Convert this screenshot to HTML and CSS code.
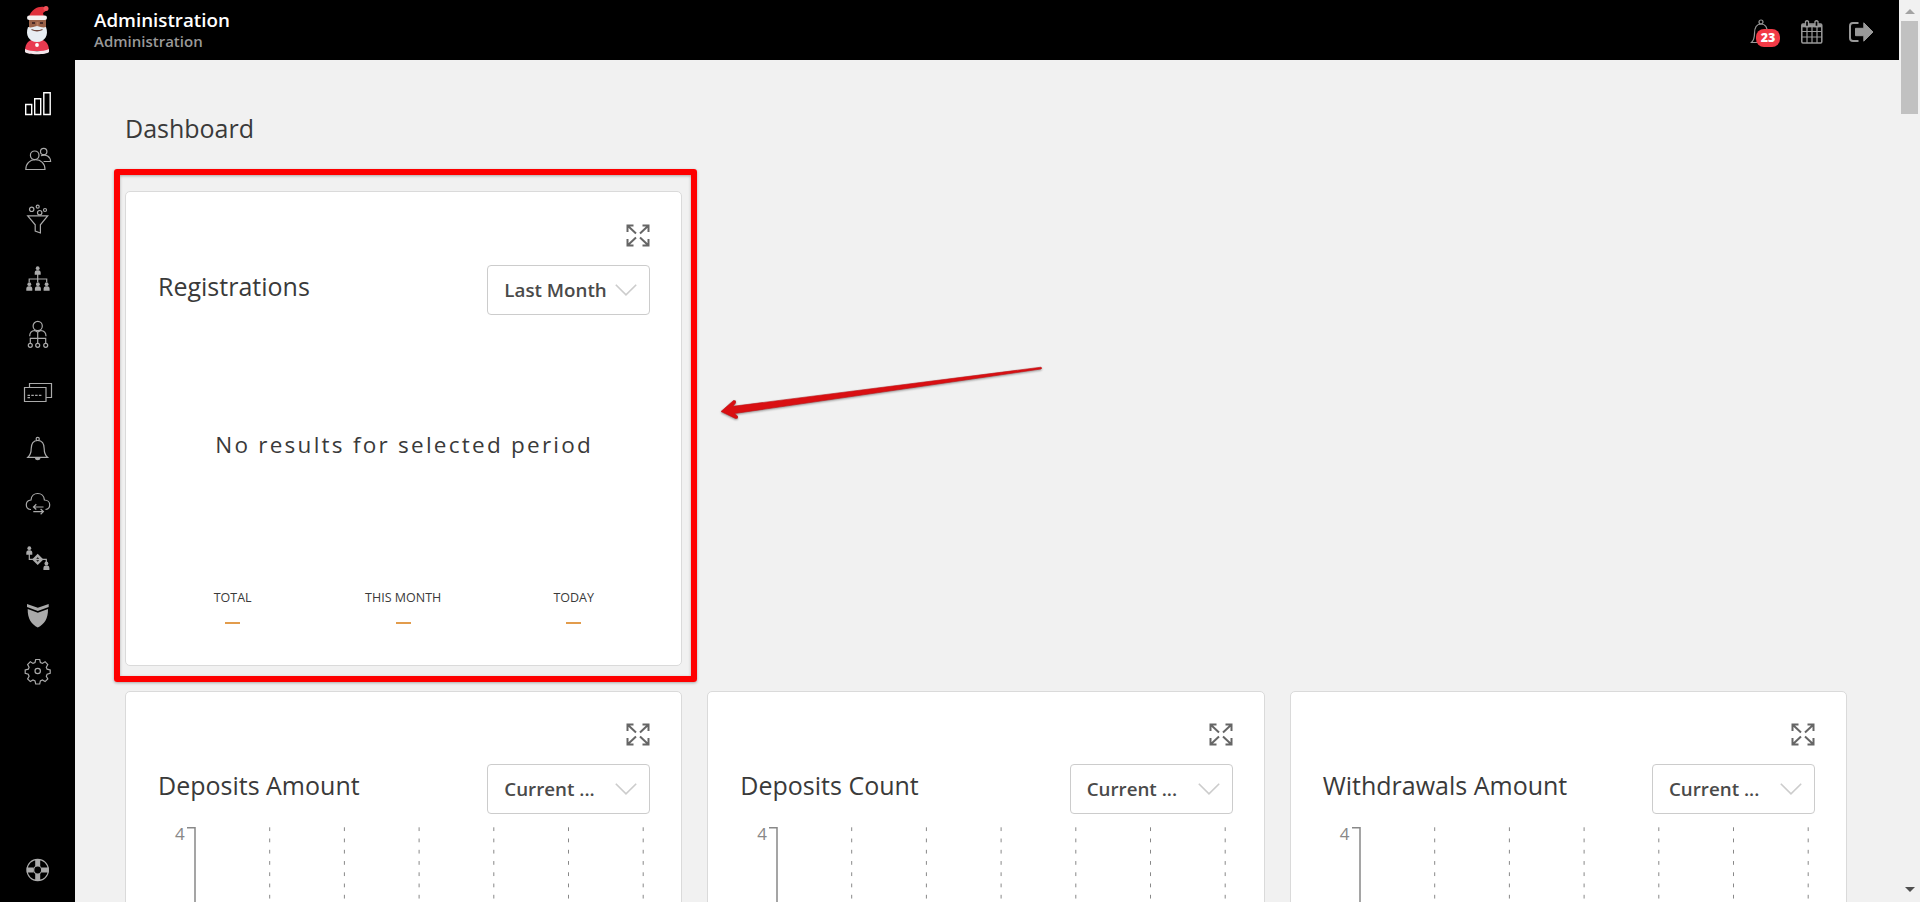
FILE: index.html
```html
<!DOCTYPE html>
<html lang="en">
<head>
<meta charset="utf-8">
<title>Dashboard</title>
<link rel="stylesheet" href="styles.css">
</head>
<body>
<svg class="defs" width="0" height="0">
  <defs>
    <g id="person"><circle cx="0" cy="-3.8" r="1.9"/><path d="M-3 2.8v-2.2a2.4 2.4 0 0 1 2-2.4h2a2.4 2.4 0 0 1 2 2.4v2.2z"/></g>
    <symbol id="expand" viewBox="0 0 24 23">
      <path fill="none" stroke="#666" stroke-width="2" d="M1.500 8V1.500h6M1.500 1.500l8.500 8M16.500 1.500h6V8M22.500 1.500l-8.500 8M1.500 15v6.500h6M1.500 21.500l8.500-8M16.500 21.500h6V15M22.500 21.500l-8.500-8"/>
    </symbol>
    <symbol id="chevron" viewBox="0 0 22 12"><path fill="none" stroke="#ccc" stroke-width="1.600" d="M.8.8 11 10.800 21.200.8"/></symbol>
    <symbol id="chart" viewBox="0 0 491 80">
      <g fill="none" stroke="#888">
        <path stroke-width="1.500" d="M11 .8h8V80"/>
        <path stroke-dasharray="3.750 7.500" d="M93.700 .3V80M168.400 .3V80M243.100 .3V80M317.800 .3V80M392.500 .3V80M467.200 .3V80"/>
      </g>
    </symbol>
  </defs>
</svg>
<div class="app">
  <aside class="sidebar">
    <svg class="logo" width="28" height="50" viewBox="0 0 28 50">
      <path fill="#e0313c" d="M5 12C7 4 15 1 20 2l3 3-4 3 1 4z"/><circle cx="22" cy="3.500" r="2.500" fill="#f0525a"/>
      <rect x="5" y="13" width="17" height="12" fill="#9a6248"/><path fill="#4b2c28" d="M8 17h3v2H8zM16 17h3v2h-3z"/><path fill="#b87a5c" d="M12.500 17h2v4h-2z"/>
      <rect x="3" y="10.500" width="20" height="4.500" rx="2.200" fill="#f4f1f1"/>
      <path fill="#e93a50" d="M1 46c0-8 4-12 12-12s12 4 12 12z"/>
      <path fill="#e8eef3" d="M4 22c3 1 5 0 9-1 4 1 6 2 9 1 3 8-1 15-9 15S1 30 4 22z"/><path fill="none" stroke="#70483d" stroke-width="1.300" d="M7.500 24.500c4 1.800 7 1.800 11 0"/>
      <circle cx="13" cy="40" r="1.900" fill="#fff"/><path fill="#f3e5ea" d="M1 44c6 3 18 3 24 0v3c-2 3-22 3-24 0z"/>
    </svg>
    <nav class="nav">
      <svg class="icon active" viewBox="0 0 40 40"><path d="M7.700 20.500h6v10h-6zM16.700 14.800h6v15.700h-6zM25.800 8.800h6.400v21.700h-6.400z"/></svg>
      <svg class="icon" viewBox="0 0 40 40"><circle cx="16.700" cy="16.300" r="4.300"/><path d="M7.800 30.500h19.200c0-6-4-9.800-9.600-9.800s-9.600 3.800-9.600 9.800z"/><circle cx="25.700" cy="12.500" r="3.200"/><path d="M23 16.800c5-2 9.400.8 9.600 5.700h-7"/></svg>
      <svg class="icon gap-5" viewBox="0 0 40 40"><circle cx="13.700" cy="10.300" r="2.200"/><circle cx="19.700" cy="7.700" r="1.500"/><circle cx="21.700" cy="13.700" r="2.200"/><circle cx="27" cy="11" r="1.500"/><path d="M9.700 16.800h20l-7.300 9v8.200l-5.200-2v-6.200z"/></svg>
      <svg class="icon gap-5" viewBox="0 0 40 40"><path d="M19.700 15v8M11.200 23v-3h17.500v3"/><g class="solid"><use href="#person" x="19.700" y="13"/><use href="#person" x="11.300" y="29"/><use href="#person" x="19.900" y="29"/><use href="#person" x="28.600" y="29"/></g></svg>
      <svg class="icon" viewBox="0 0 40 40"><circle cx="19.700" cy="12" r="4.600"/><path d="M11.700 22.300c0-3.800 2.600-5.600 5-5.800l3 1.500 3-1.500c2.700.2 5.300 2 5.300 5.800M19.700 18v11M12.300 29v-4.600h15.400V29"/><circle cx="12.300" cy="31.300" r="2"/><circle cx="19.700" cy="31.300" r="2"/><circle cx="27.700" cy="31.300" r="2"/></svg>
      <svg class="icon gap-4" viewBox="0 0 40 40"><path d="M6.500 14.500h21.500v14h-21.500zM11.500 14.500v-4h22v14h-5.500"/><path stroke-dasharray="2.500 1.300" d="M9.500 22.300h15M9.500 24.600h3.500"/></svg>
      <svg class="icon gap-1" viewBox="0 0 40 40"><circle cx="19.700" cy="9.900" r="1.600"/><path d="M9.900 28.300c2-1.700 3.300-4.300 3.300-8.500 0-5.500 2.200-8.300 6.500-8.300s6.500 2.800 6.500 8.300c0 4.200 1.300 6.800 3.300 8.500z"/><path class="solid" d="M17 29h5.400c0 3-5.400 3-5.400 0z"/></svg>
      <svg class="icon" viewBox="0 0 40 40"><path d="M13 25.500h-.5C9.800 25.200 8.300 23 8.300 20.800c0-2.800 2-4.600 4.700-4.800.3-4 3.200-6.500 6.700-6.500s6.400 2.500 6.700 6.500c3 0 5.300 2 5.300 4.800 0 2.400-1.700 4.500-4.200 4.700M25.500 23H15.500M18.300 20.300 15.500 23l2.800 2.500M15.300 27.600h10M22.600 25l2.800 2.600-2.800 2.600"/></svg>
      <svg class="icon" viewBox="0 0 40 40"><path d="M11.300 15v5.300h5M23 20.300h5.300V25"/><g class="solid"><use href="#person" x="11.300" y="13"/><use href="#person" x="28.400" y="28.300"/><path fill-rule="evenodd" d="m19.700 14.700 5.700 5.700-5.700 5.700-5.700-5.700zM18.200 19.700l1.500-1.500 1.500 1.500zM18.200 21.300h3l-1.500 1.500z"/></g></svg>
      <svg class="icon gap-2" viewBox="0 0 40 40"><path class="solid" d="M9 8l10.800 3.700L30.700 8v3l-10.900 4L9 11zM9.700 13l10.100 3.700L30 13c.2 9.600-3.600 15.400-10.200 18.400-6.500-3-10.300-8.800-10.100-18.400z"/></svg>
      <svg class="icon" viewBox="0 0 40 40"><circle cx="19.700" cy="20" r="2.700"/><path d="M17.700 8.500h4l.7 3 2 .9 2.700-1.700 2.700 2.800-1.500 2.700.8 2 3.100.8v3.400l-3.100.8-.8 2 1.500 2.700-2.700 2.700-2.700-1.600-2 .9-.7 3.100h-4l-.7-3.100-2-.9-2.700 1.600-2.700-2.700 1.500-2.700-.8-2-3.100-.8v-3.400l3.100-.8.8-2-1.500-2.700 2.700-2.800 2.700 1.700 2-.9z"/></svg>
    </nav>
    <svg class="icon help" viewBox="0 0 40 40"><circle cx="19.700" cy="20" r="10.700"/><circle cx="19.700" cy="20" r="4"/><path stroke-width="5" d="M19.700 9v7M19.700 24v7M8.700 20h7M23.700 20h7"/></svg>
  </aside>
  <div class="page">
    <header class="topbar">
      <div class="brand"><div class="brand-title">Administration</div><div class="brand-sub">Administration</div></div>
      <div class="tools">
        <div class="alerts">
          <svg width="22" height="26" viewBox="0 0 22 26" fill="none" stroke="#999" stroke-width="1.200"><circle cx="11" cy="3" r="2"/><path d="M1.500 23.500c2-2 3-4.500 3-9C4.500 8.500 6.500 5 11 5s6.500 3.500 6.500 9.500c0 4.500 1 7 3 9z"/></svg>
          <span class="badge">23</span>
        </div>
        <svg class="calendar" width="22" height="24" viewBox="0 0 22 24" fill="none" stroke="#999"><rect x=".8" y="4" width="20" height="19" rx="1.200" stroke-width="1.500"/><path stroke-width="3" d="M1 5.800h20"/><path stroke-width="1.200" d="M1 11.500h20M1 17h20M6 7v16M11 7v16M16 7v16"/><path fill="#000" stroke-width="1.300" d="M4.500 1.500q1.500-1.500 3 0v5h-3zM14 1.500q1.500-1.500 3 0v5h-3z"/></svg>
        <svg width="26" height="22" viewBox="0 0 26 22"><path fill="none" stroke="#999" stroke-width="2" d="M10.500 2H5Q2 2 2 5v12q0 3 3 3h5.500"/><path fill="#999" stroke="#999" stroke-linejoin="round" d="M7.500 7.300h8.300V1.800L25 11l-9.200 9.200v-5.500H7.500z"/></svg>
      </div>
    </header>
    <main class="content">
      <h1 class="title">Dashboard</h1>
      <div class="grid">
        <section class="card card-first">
          <svg class="expand" width="24" height="23"><use href="#expand"/></svg>
          <div class="card-head"><h2 class="card-title">Registrations</h2><div class="select"><span>Last Month</span><svg width="22" height="12"><use href="#chevron"/></svg></div></div>
          <div class="empty">No results for selected period</div>
          <div class="stats">
            <div class="stat">TOTAL<i class="dash"></i></div><div class="stat">THIS MONTH<i class="dash"></i></div><div class="stat">TODAY<i class="dash"></i></div>
          </div>
        </section>
        <section class="card">
          <svg class="expand" width="24" height="23"><use href="#expand"/></svg>
          <div class="card-head"><h2 class="card-title">Deposits Amount</h2><div class="select"><span>Current ...</span><svg width="22" height="12"><use href="#chevron"/></svg></div></div>
          <div class="chart"><span class="tick">4</span><svg width="491" height="80"><use href="#chart"/></svg></div>
        </section>
        <section class="card">
          <svg class="expand" width="24" height="23"><use href="#expand"/></svg>
          <div class="card-head"><h2 class="card-title">Deposits Count</h2><div class="select"><span>Current ...</span><svg width="22" height="12"><use href="#chevron"/></svg></div></div>
          <div class="chart"><span class="tick">4</span><svg width="491" height="80"><use href="#chart"/></svg></div>
        </section>
        <section class="card">
          <svg class="expand" width="24" height="23"><use href="#expand"/></svg>
          <div class="card-head"><h2 class="card-title">Withdrawals Amount</h2><div class="select"><span>Current ...</span><svg width="22" height="12"><use href="#chevron"/></svg></div></div>
          <div class="chart"><span class="tick">4</span><svg width="491" height="80"><use href="#chart"/></svg></div>
        </section>
      </div>
    </main>
  </div>
  <div class="scrollbar">
    <svg width="10" height="5" viewBox="0 0 10 5"><path fill="#a3a3a3" d="M0 5 5 0l5 5z"/></svg>
    <div class="thumb"></div>
    <svg width="10" height="5" viewBox="0 0 10 5"><path fill="#505050" d="M0 0h10L5 5z"/></svg>
  </div>
</div>
<div class="highlight"></div>
<svg class="pointer" width="340" height="70" viewBox="710 360 340 70"><path fill="#d90f12" stroke="#c01014" stroke-width=".6" stroke-linejoin="round" d="M721 411.500 733.500 400.500Q736.500 400 735.500 403L733 406.300 1041 367.200Q1042.500 368 1041 369L734.500 413.500 737.500 416Q738.500 419 735.500 418.500z"/></svg>
</body>
</html>
```
FILE: styles.css
```css
* { box-sizing: border-box; }
html, body { margin: 0; height: 100%; overflow: hidden; }
body { font-family: "Open Sans", sans-serif; color: #3a3a3a; background: #f1f1f1; }
svg { display: block; flex: none; }
.defs { position: absolute; }
.app { display: flex; height: 902px; }

.sidebar { width: 75px; background: #000; display: flex; flex-direction: column; align-items: center; padding-top: 5px; }
.nav { margin-top: 29px; display: flex; flex-direction: column; gap: 15px; }
.icon { width: 40px; height: 40px; fill: none; stroke: #aaa; stroke-width: 1.2; }
.icon.active { stroke: #fff; stroke-width: 1.4; }
.icon .solid { fill: #aaa; stroke: none; }
.gap-1 { margin-top: 1px; }
.gap-2 { margin-top: 2px; }
.gap-4 { margin-top: 4px; }
.gap-5 { margin-top: 5px; }
.help { margin: auto 0 12px; }

.page { flex: 1; min-width: 0; display: flex; flex-direction: column; }
.topbar { height: 60px; background: #000; display: flex; justify-content: space-between; padding: 0 25px 0 19px; flex: none; }
.brand { font-weight: 600; padding-top: 8px; }
.brand-title { color: #fff; font-size: 18.75px; line-height: 24px; }
.brand-sub { color: #999; font-size: 15px; line-height: 18px; }
.tools { display: flex; align-items: center; padding-top: 4px; }
.alerts { position: relative; margin-right: 29px; }
.badge { position: absolute; left: 6px; top: 10px; width: 24px; height: 18px; border-radius: 8px; background: #f23a46; color: #fff; font-size: 12.5px; font-weight: 800; line-height: 17px; text-align: center; }
.calendar { margin-right: 25px; }

.content { flex: 1; min-height: 0; overflow: hidden; padding: 49px 52px 0 50px; }
.title { margin: 0; font-size: 25px; line-height: 38px; font-weight: 400; }
.grid { margin-top: 44px; display: grid; grid-template-columns: repeat(3, minmax(0, 1fr)); gap: 25px; }
.card { height: 475px; background: #fff; border: 1px solid #dadada; border-radius: 5px; padding: 31px 31px 0 32px; display: flex; flex-direction: column; }
.card-first { grid-column: 1; padding-top: 32px; }
.card:nth-child(2) { grid-column: 1; }
.expand { align-self: flex-end; }
.card-head { margin-top: 18px; display: flex; justify-content: space-between; align-items: center; }
.card-title { margin: 0; padding-bottom: 9px; font-size: 25px; line-height: 36px; font-weight: 400; }
.select { width: 163px; height: 50px; border: 1px solid #ccc; border-radius: 4px; display: flex; align-items: center; justify-content: space-between; padding: 0 12px 1px 16px; font-size: 18.75px; font-weight: 600; color: #4a4a4a; }
.empty { margin-top: 112px; text-align: center; font-size: 22.5px; line-height: 36px; letter-spacing: 2.25px; white-space: nowrap; }
.stats { margin-top: 125px; padding: 0 2px 0 0; display: grid; grid-template-columns: repeat(3, 170.5px); justify-content: center; }
.stat { display: flex; flex-direction: column; align-items: center; font-size: 12.5px; line-height: 20px; }
.dash { width: 15px; height: 2px; margin-top: 14px; background: #e29c4c; }
.chart { margin-top: 13px; display: flex; height: 80px; }
.tick { width: 18px; flex: none; padding-left: 17px; font-size: 17px; line-height: 14px; color: #888; }

.scrollbar { width: 21px; background: #f1f1f1; display: flex; flex-direction: column; align-items: center; padding: 9px 0 10px; }
.thumb { width: 17px; height: 93px; margin: 7px 0 auto; background: #c1c1c1; }

.highlight { position: absolute; left: 114px; top: 169px; width: 583px; height: 513px; border: 6px solid #fe0000; border-radius: 3px; box-shadow: 0 1px 3px rgba(0, 0, 0, .3), inset 0 1px 3px rgba(0, 0, 0, .3); }
.pointer { position: absolute; left: 710px; top: 360px; filter: drop-shadow(0 1px 1px rgba(0, 0, 0, .4)); }
```
